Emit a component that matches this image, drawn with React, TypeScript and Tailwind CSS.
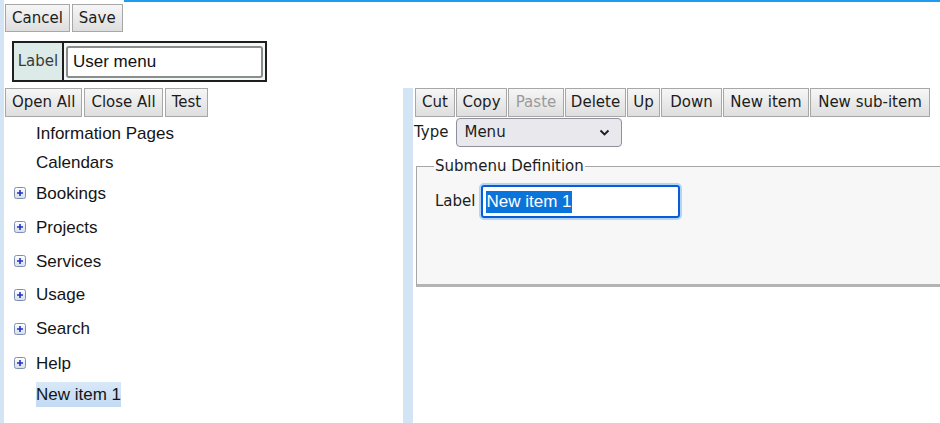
import React from 'react';

const btn =
  "px-[6px] border border-[#a7a7a7] bg-gradient-to-b from-[#f6f6f6] to-[#dedede] text-[15px] leading-none text-[#1c1c1c] whitespace-nowrap flex items-center justify-center";

const Btn = ({ label, disabled, focused, tall, w }: { label: string; disabled?: boolean; focused?: boolean; tall?: boolean; w?: string }) => (
  <button
    className={
      btn +
      (tall ? " h-[29px]" : " h-[28px]") +
      (w ? " " + w : "") +
      (disabled ? " text-[#9a9a9a]" : "") +
      (focused ? " border-[#6f9fd8] from-[#eef5fc] to-[#dde8f4]" : "")
    }
  >
    {label}
  </button>
);

const Plus = () => (
  <svg width="12" height="12" viewBox="0 0 12 12" className="shrink-0">
    <defs>
      <linearGradient id="pg" x1="0" y1="0" x2="0" y2="1">
        <stop offset="0" stopColor="#ffffff" />
        <stop offset="1" stopColor="#d6dcec" />
      </linearGradient>
    </defs>
    <rect x="0.5" y="0.5" width="11" height="11" rx="2" fill="url(#pg)" stroke="#7f8fb3" />
    <path d="M3 6h6M6 3v6" stroke="#1f33c4" strokeWidth="1.6" />
  </svg>
);

const tree: { label: string; plus?: boolean; selected?: boolean; h: string }[] = [
  { label: 'Information Pages', h: 'h-[29px]' },
  { label: 'Calendars', h: 'h-[28px]' },
  { label: 'Bookings', plus: true, h: 'h-[34px]' },
  { label: 'Projects', plus: true, h: 'h-[34px]' },
  { label: 'Services', plus: true, h: 'h-[34px]' },
  { label: 'Usage', plus: true, h: 'h-[33px]' },
  { label: 'Search', plus: true, h: 'h-[35px]' },
  { label: 'Help', plus: true, h: 'h-[34px]' },
  { label: 'New item 1', selected: true, h: 'h-[28px]' },
];

export default function App() {
  return (
    <div className="w-[940px] h-[423px] overflow-hidden bg-white flex font-['DejaVu_Sans',sans-serif]">
      {/* left edge strip */}
      <div className="w-[4px] shrink-0 bg-[#d3e5f5]" />

      <div className="flex-1 flex flex-col min-w-0">
        {/* top actions */}
        <div className="flex items-start">
          <div className="flex gap-[2px] pt-[4px] pl-[1px]">
            <Btn label="Cancel" />
            <Btn label="Save" />
          </div>
          <div className="flex-1 h-[2px] bg-[#1f9cf0] ml-[1px]" />
        </div>

        {/* menu label */}
        <div className="ml-[8px] mt-[9px] w-[255px] h-[41px] border-2 border-[#1e1e1e] flex bg-[#f1f8f6]">
          <div className="w-[50px] border-r-2 border-[#1e1e1e] bg-[#dcebe7] flex items-center justify-center text-[15px] text-[#3a3a3a]">
            Label
          </div>
          <div className="flex-1 flex items-center px-[2px]">
            <div className="w-full h-[32px] border-2 border-[#8c8c8c] rounded-[3px] bg-white flex items-center pl-[5px] font-['Liberation_Sans',sans-serif] text-[17px] text-[#111]">
              User menu
            </div>
          </div>
        </div>

        <div className="flex flex-1 mt-[4px] min-h-0">
          {/* tree panel */}
          <div className="w-[399px] shrink-0 flex flex-col">
            <div className="flex gap-[2px] pl-[1px] mt-[2px]">
              <Btn label="Open All" tall />
              <Btn label="Close All" tall />
              <Btn label="Test" tall />
            </div>
            <div className="flex flex-col pt-[2px] font-['Liberation_Sans',sans-serif] text-[17px] text-[#141414]">
              {tree.map((t) => (
                <div key={t.label} className={"flex items-center " + t.h}>
                  <div className="w-[32px] pl-[10px] flex items-center">{t.plus && <Plus />}</div>
                  <span
                    className={
                      "leading-[25px] " +
                      (t.selected ? "bg-gradient-to-b from-[#d8e8f8] to-[#c2daf3]" : "")
                    }
                  >
                    {t.label}
                  </span>
                </div>
              ))}
            </div>
          </div>

          {/* editor panel */}
          <div className="flex-1 flex min-w-0 mt-[2px]">
            <div className="w-[10px] shrink-0 bg-[#d3e5f5]" />
            <div className="flex-1 flex flex-col min-w-0 overflow-hidden">
              <div className="flex gap-[1px] pl-[2px]">
                <Btn label="Cut" tall w="w-[40px]" />
                <Btn label="Copy" tall w="w-[51px]" />
                <Btn label="Paste" disabled tall w="w-[56px]" />
                <Btn label="Delete" tall w="w-[61px]" />
                <Btn label="Up" tall w="w-[33px]" />
                <Btn label="Down" tall w="w-[61px]" />
                <Btn label="New item" focused tall w="w-[86px]" />
                <Btn label="New sub-item" tall w="w-[120px]" />
              </div>

              <div className="flex items-center gap-[8px] mt-[1px] pl-[1px] text-[15px] text-[#1c1c1c]">
                <span>Type</span>
                <div className="w-[166px] h-[29px] rounded-[4px] border border-[#8f8f9d] bg-[#e9e9ed] flex items-center justify-between pl-[7px] pr-[11px]">
                  <span>Menu</span>
                  <svg width="11" height="7" viewBox="0 0 11 7">
                    <path d="M1.5 1.5l4 4 4-4" fill="none" stroke="#1c1c1c" strokeWidth="1.8" />
                  </svg>
                </div>
              </div>

              <fieldset className="ml-[3px] mt-[10px] w-[560px] h-[130px] border border-[#a6a6a6] border-b-[3px] border-b-[#b4b4b4] bg-[#f7f7f7] pl-[18px]">
                <legend className="px-[1px] ml-[-1px] text-[15px] text-[#1c1c1c] leading-[18px]">
                  Submenu Definition
                </legend>
                <div className="flex items-center gap-[4px] mt-[8px] text-[15px] text-[#1c1c1c]">
                  <span>Label</span>
                  <div className="w-[203px] h-[37px] rounded-[5px] border-2 border-[#b2d6f8] flex">
                    <div className="flex-1 rounded-[3px] border-2 border-[#0a5bd6] bg-white flex items-center pl-[3px] font-['Liberation_Sans',sans-serif] text-[17px]">
                      <span className="bg-[#0a74da] text-white leading-[22px]">New item 1</span>
                    </div>
                  </div>
                </div>
              </fieldset>
            </div>
          </div>
        </div>
      </div>
    </div>
  );
}
